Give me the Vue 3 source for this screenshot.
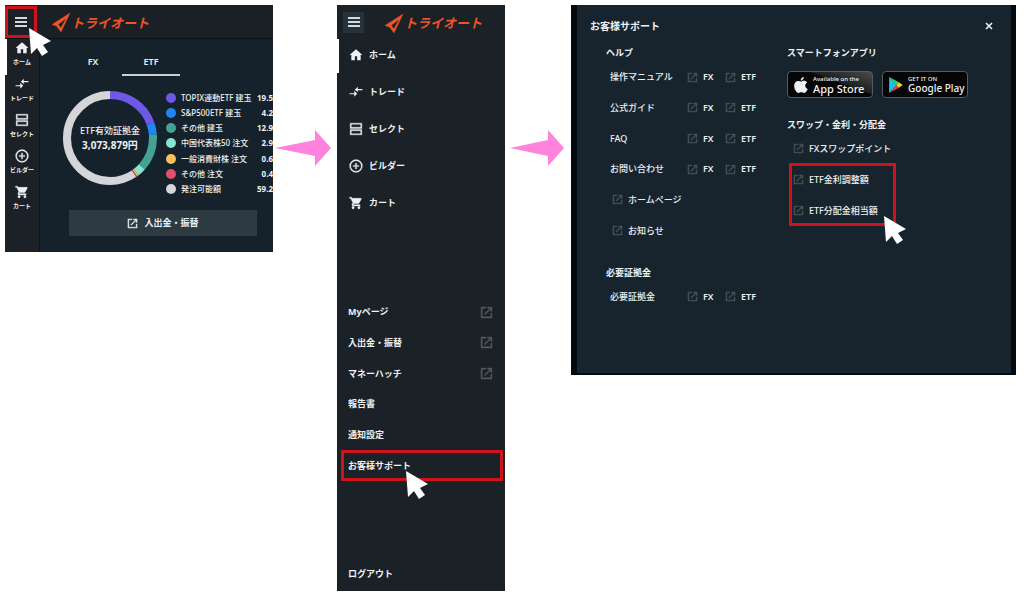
<script setup>
const nav = [
  { icon: 'home', label: 'ホーム' },
  { icon: 'trade', label: 'トレード' },
  { icon: 'select', label: 'セレクト' },
  { icon: 'builder', label: 'ビルダー' },
  { icon: 'cart', label: 'カート' },
]

const holdings = [
  { label: 'TOPIX連動ETF 建玉', value: '19.5', color: '#6f58e6' },
  { label: 'S&P500ETF 建玉', value: '4.2', color: '#1e86f5' },
  { label: 'その他 建玉', value: '12.9', color: '#44a196' },
  { label: '中国代表株50 注文', value: '2.9', color: '#86e3cf' },
  { label: '一般消費財株 注文', value: '0.6', color: '#fbc15c' },
  { label: 'その他 注文', value: '0.4', color: '#e2506c' },
  { label: '発注可能額', value: '59.2', color: '#d3d5d8' },
]

const total = holdings.reduce((sum, h) => sum + Number(h.value), 0)
let start = 0
const segments = holdings.map((h) => {
  const share = (Number(h.value) / total) * 100
  const segment = { color: h.color, share, offset: -start }
  start += share
  return segment
})

const menu = [
  { label: 'Myページ', external: true },
  { label: '入出金・振替', external: true },
  { label: 'マネーハッチ', external: true },
  { label: '報告書' },
  { label: '通知設定' },
  { label: 'お客様サポート', marked: true },
]

const help = ['操作マニュアル', '公式ガイド', 'FAQ', 'お問い合わせ']
const helpLinks = ['ホームページ', 'お知らせ']
</script>

<template>
  <svg class="sprite" aria-hidden="true">
    <symbol id="home" viewBox="0 0 24 24"><path d="M10 21v-7h4v7h6v-9h3L12 2 1 12h3v9z" /></symbol>
    <symbol id="trade" viewBox="0 0 24 24"><path d="M9 14H1v2h8v4l5-5-5-5zM15 12V9h8V7h-8V3l-5 5z" /></symbol>
    <symbol id="select" viewBox="0 0 24 24"><path d="M2 2h20v9H2zM4 4v5h16V4zM2 13h20v9H2zM4 15v5h16v-5z" fill-rule="evenodd" stroke="currentColor" stroke-width=".6" /></symbol>
    <symbol id="builder" viewBox="0 0 24 24"><path d="M13 7h-2v4H7v2h4v4h2v-4h4v-2h-4V7zm-1-6a11 11 0 1 0 0 22 11 11 0 0 0 0-22zm0 20a9 9 0 1 1 0-18 9 9 0 0 1 0 18z" stroke="currentColor" stroke-width=".5" /></symbol>
    <symbol id="cart" viewBox="0 0 24 24"><path d="M7 18a2 2 0 1 0 0 4 2 2 0 0 0 0-4zM1 2v2h2l3.6 7.59-1.35 2.45C4.5 15.4 5.500 17 7 17h12v-2H7.42c-.2 0-.3-.2-.22-.37l.9-1.63h7.45c.75 0 1.41-.41 1.75-1.03l3.58-6.49A1 1 0 0 0 20 4H5.21l-.94-2zm16 16a2 2 0 1 0 0 4 2 2 0 0 0 0-4z" stroke="currentColor" stroke-width=".8" /></symbol>
    <symbol id="open" viewBox="0 0 24 24"><path d="M20 20H4V4h7V2H2v20h20v-9h-2zM14 2v2h4.6L8 14.600 9.400 16 20 5.400V10h2V2z" stroke="currentColor" stroke-width=".8" /></symbol>
    <symbol id="bars" viewBox="0 0 12 10"><path d="M0 0h12v2H0zM0 4h12v2H0zM0 8h12v2H0z" /></symbol>
    <symbol id="mark" viewBox="0 0 20 20"><path d="M19 0 0 12l5 2 4.500 6zM15 5.500 6.500 12l3 3.500z" fill-rule="evenodd" stroke="currentColor" stroke-width=".4" /></symbol>
    <symbol id="cursor" viewBox="0 0 22 28"><path d="M0 0l2 26 6-6 5 8 6-4-5-7 8-4z" /></symbol>
  </svg>

  <main class="page">
    <section class="panel home">
      <header class="bar">
        <button class="burger marked" type="button" aria-label="メニュー"><svg><use href="#bars" /></svg></button>
        <a class="logo" href="#"><svg><use href="#mark" /></svg>トライオート</a>
        <svg class="cursor"><use href="#cursor" /></svg>
      </header>
      <div class="body">
        <nav class="rail">
          <a v-for="n in nav" :key="n.label" href="#"><svg><use :href="'#' + n.icon" /></svg>{{ n.label }}</a>
        </nav>
        <div class="content">
          <div class="tabs">
            <button type="button">FX</button>
            <button type="button" class="active">ETF</button>
          </div>
          <div class="chart">
            <div class="donut">
              <svg viewBox="0 0 96 96">
                <circle
                  v-for="s in segments" :key="s.color" cx="48" cy="48" r="43" pathLength="100"
                  :stroke="s.color" :stroke-dasharray="s.share + ' ' + (100 - s.share)" :stroke-dashoffset="s.offset"
                />
              </svg>
              <p>ETF有効証拠金<strong>3,073,879円</strong></p>
            </div>
            <ul class="legend">
              <li v-for="h in holdings" :key="h.label">
                <svg viewBox="0 0 10 10"><circle cx="5" cy="5" r="5" :fill="h.color" /></svg>
                <span>{{ h.label }}</span><b>{{ h.value }}</b>
              </li>
            </ul>
          </div>
          <button class="transfer" type="button"><svg><use href="#open" /></svg>入出金・振替</button>
        </div>
      </div>
    </section>

    <svg class="arrow" viewBox="0 0 56 36"><path d="M0 18 40 10V0l16 18-16 18V26z" /></svg>

    <section class="panel drawer">
      <header class="bar">
        <button class="burger raised" type="button" aria-label="メニュー"><svg><use href="#bars" /></svg></button>
        <a class="logo" href="#"><svg><use href="#mark" /></svg>トライオート</a>
      </header>
      <nav class="primary">
        <a v-for="n in nav" :key="n.label" href="#"><svg><use :href="'#' + n.icon" /></svg>{{ n.label }}</a>
      </nav>
      <nav class="secondary">
        <a v-for="m in menu" :key="m.label" href="#" :class="{ marked: m.marked }">
          {{ m.label }}
          <svg v-if="m.external" class="ext"><use href="#open" /></svg>
          <svg v-if="m.marked" class="cursor"><use href="#cursor" /></svg>
        </a>
      </nav>
      <button class="logout" type="button">ログアウト</button>
    </section>

    <svg class="arrow" viewBox="0 0 56 36"><path d="M0 18 38 10V0l16 18-16 18V26z" /></svg>

    <section class="panel backdrop">
      <div class="dialog">
        <header>
          <h1>お客様サポート</h1>
          <button type="button" aria-label="閉じる"><svg viewBox="0 0 8 8"><path d="M1 1l6 6M7 1 1 7" /></svg></button>
        </header>
        <div class="columns">
          <div>
            <h2>ヘルプ</h2>
            <ul class="rows six">
              <li v-for="h in help" :key="h" class="pair">
                <span>{{ h }}</span>
                <a href="#"><svg><use href="#open" /></svg>FX</a>
                <a href="#"><svg><use href="#open" /></svg>ETF</a>
              </li>
              <li v-for="h in helpLinks" :key="h"><a href="#"><svg><use href="#open" /></svg>{{ h }}</a></li>
            </ul>
            <h2 class="margin-title">必要証拠金</h2>
            <ul class="rows">
              <li class="pair">
                <span>必要証拠金</span>
                <a href="#"><svg><use href="#open" /></svg>FX</a>
                <a href="#"><svg><use href="#open" /></svg>ETF</a>
              </li>
            </ul>
          </div>
          <div>
            <h2>スマートフォンアプリ</h2>
            <div class="stores">
              <a href="#" class="apple">
                <svg viewBox="0 0 24 28"><path d="M17 0c.2 3-2.400 6-5.500 6C11.200 3 14 .3 17 0zM12 8c1.500 0 3-1.300 5.500-1.300 2 0 4 1 5.300 2.800-5 3-4 9.500 1 11.500-1.500 4-3.800 7-6.300 7-2 0-2.700-1.200-5-1.200S9.300 28 7.500 28C4 28 0 21 0 15.500 0 10 3.500 6.800 7 6.800c2.200 0 3.500 1.200 5 1.200z" /></svg>
                <span><small>Available on the</small>App Store</span>
              </a>
              <a href="#" class="google">
                <svg viewBox="0 0 24 28">
                  <path d="M0 0v28l13-14z" fill="#19c3e6" /><path d="M0 0l17 9-4.500 5z" fill="#2bd37b" />
                  <path d="M0 28l17-9-4.500-5z" fill="#ee3b52" /><path d="M17 9l7 5-7 5-4.500-5z" fill="#fccb1c" />
                </svg>
                <span><small>GET IT ON</small>Google Play</span>
              </a>
            </div>
            <h2 class="swap-title">スワップ・金利・分配金</h2>
            <ul class="rows">
              <li><a href="#"><svg><use href="#open" /></svg>FXスワップポイント</a></li>
            </ul>
            <div class="marked">
              <ul class="rows">
                <li><a href="#"><svg><use href="#open" /></svg>ETF金利調整額</a></li>
                <li><a href="#"><svg><use href="#open" /></svg>ETF分配金相当額</a></li>
              </ul>
              <svg class="cursor"><use href="#cursor" /></svg>
            </div>
          </div>
        </div>
      </div>
    </section>
  </main>
</template>

<style>
body { margin: 0; background: #fff; }
</style>

<style scoped>
.sprite { position: absolute; width: 0; height: 0; }
.page {
  display: grid;
  grid-template-columns: 268fr 64fr 168fr 66fr 445fr;
  align-items: start;
  padding: 5px 8px 5px 5px;
  font: 500 9px/14px "Noto Sans", "Noto Sans CJK JP", sans-serif;
  color: #eef1f3;
}
svg { fill: currentColor; flex: none; display: block; }
a { color: inherit; text-decoration: none; }
button { font: inherit; color: inherit; background: none; border: 0; padding: 0; }
ul { list-style: none; margin: 0; padding: 0; }
h1, h2, p { margin: 0; }
.panel { min-width: 0; position: relative; }
.arrow { width: 56px; height: 36px; margin: 125px 0 0 2px; color: #ff82dc; }
.drawer + .arrow { margin-left: 5px; }
.cursor { position: absolute; width: 22px; height: 28px; color: #fff; z-index: 2; }

.bar { display: flex; align-items: center; height: 34px; box-sizing: border-box; position: relative; }
.burger { display: flex; align-items: center; justify-content: center; box-sizing: border-box; }
.burger svg { width: 12px; height: 10px; color: #d5d9dc; }
.logo { display: flex; align-items: center; color: #ee5426; font-size: 13px; line-height: 20px; font-weight: 700; font-style: italic; white-space: nowrap; padding-top: 2px; }
.logo svg { width: 19px; height: 19px; }

.home { background: #15222b; overflow: hidden; }
.home .bar { background: #1a2026; border-bottom: 1px solid #0d1419; }
.home .burger { width: 32px; height: 32px; border: 3px solid #d0121b; }
.home .logo { margin-left: 15px; }
.home .bar .cursor { left: 24px; top: 23px; }
.body { display: flex; }
.rail { width: 34px; flex: none; background: #1b2126; border-right: 1px solid #0e161b; padding-bottom: 33px; }
.rail a { display: flex; flex-direction: column; align-items: center; height: 36px; padding-top: 2px; box-sizing: border-box; font-size: 6px; line-height: 14px; font-weight: 700; white-space: nowrap; }
.rail a:first-child, .primary a:first-child { box-shadow: inset 2px 0 #fff; }
.rail svg { width: 14px; height: 14px; }
.content { flex: 1; min-width: 0; padding: 11px 0 0 24px; }
.tabs { display: flex; height: 26px; }
.tabs button { width: 58px; border-bottom: 2px solid transparent; font-weight: 600; }
.tabs .active { border-color: #c9d0d4; }
.chart { display: flex; align-items: flex-start; margin-top: 14px; }
.donut { display: grid; place-items: center; width: 96px; margin: 0 8px 0 -2px; flex: none; }
.donut > * { grid-area: 1 / 1; }
.donut svg { width: 96px; height: 96px; transform: rotate(-90deg); }
.donut circle { fill: none; stroke-width: 8; }
.donut p { text-align: center; white-space: nowrap; }
.donut strong { display: block; font-size: 10px; }
.legend { flex: 1; min-width: 0; display: grid; grid-template-columns: minmax(0, 1fr); grid-auto-rows: 1fr; height: 107px; }
.legend li { display: flex; align-items: center; white-space: nowrap; }
.legend svg { width: 10px; height: 10px; margin-right: 5px; }
.legend span { font-size: 8px; }
.legend b { font-size: 8px; margin-left: auto; }
.transfer { display: flex; align-items: center; justify-content: center; gap: 6px; height: 26px; width: calc(100% - 21px); margin: 13px 0 0 5px; background: #2e3a42; font-weight: 700; }
.transfer svg { width: 11px; height: 11px; }

.drawer { background: #1a2127; padding-bottom: 10px; }
.drawer .burger { width: 21px; height: 21px; margin-left: 6px; background: #26323b; }
.drawer .logo { margin-left: 21px; }
.primary { font-weight: 700; }
.primary a { display: flex; align-items: center; gap: 6px; height: 37px; padding-left: 12px; }
.primary a:first-child { height: 32px; padding-bottom: 2px; }
.primary svg { width: 14px; height: 14px; }
.secondary { display: grid; grid-auto-rows: 1fr; height: 184px; margin-top: 76px; font-weight: 700; }
.secondary a { display: flex; align-items: center; justify-content: space-between; padding: 0 12px 0 11px; position: relative; }
.ext { width: 13px; height: 13px; color: #555b60; }
.secondary .marked::after { content: ""; position: absolute; inset: 0 2px 0 4px; border: 3px solid #d0121b; }
.secondary .cursor { left: 69px; top: 21px; }
.logout { display: block; margin: 86px 0 0 11px; font-weight: 700; }

.backdrop { background: #03090d; padding: 0 5px 2px 6px; }
.dialog { background: #17242d; padding: 14px 0 61px 13px; }
.dialog header { display: flex; justify-content: space-between; align-items: center; }
h1 { font-size: 10px; line-height: 14px; font-weight: 700; }
.dialog header svg { width: 8px; height: 8px; stroke: currentColor; stroke-width: 1.6; margin-right: 18px; }
.columns { display: grid; grid-template-columns: 181fr 224fr; padding: 13px 0 0 16px; }
h2 { font-size: 9px; line-height: 14px; font-weight: 700; }
.rows { display: grid; grid-auto-rows: 31px; }
.rows.six { grid-auto-rows: 1fr; height: 184px; margin-top: 2px; }
.rows li { display: flex; align-items: center; white-space: nowrap; padding-left: 6px; }
.rows li.pair { padding-left: 4px; }
.pair span { width: 77px; }
.pair a { width: 38px; font-weight: 600; }
.rows a { display: flex; align-items: center; gap: 5px; }
.rows svg { width: 11px; height: 11px; color: #4b555c; }
.margin-title { margin-top: 20px; }
.margin-title + .rows { margin-top: 1px; }
.stores { display: flex; gap: 9px; margin-top: 11px; }
.stores a { display: flex; align-items: center; gap: 5px; width: 86px; height: 27px; box-sizing: border-box; padding-left: 6px; border: 1px solid #555a5e; border-radius: 4px; background: #050505; font-size: 11px; line-height: 11px; font-weight: 500; white-space: nowrap; }
.stores .apple { background: linear-gradient(200deg, #4a4b4c, #1c1d1e 40%, #060606 41%); }
.stores svg { width: 14px; height: 16px; }
.stores small { display: block; font-size: 6px; line-height: 8px; }
.stores .google { font-size: 10px; }
.swap-title { margin-top: 20px; }
.swap-title + .rows { margin-top: 1px; }
.marked { position: relative; }
.columns .marked::after { content: ""; position: absolute; left: 2px; top: -1px; width: 101px; height: 57px; border: 3px solid #d0121b; }
.columns .cursor { left: 97px; top: 52px; }
</style>
